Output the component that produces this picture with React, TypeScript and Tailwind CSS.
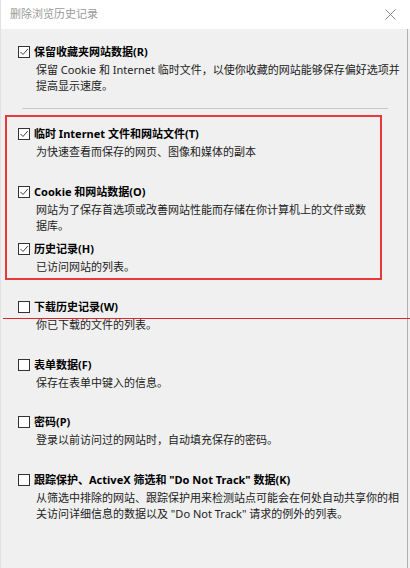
const font = { fontFamily: '"Noto Sans", "Noto Sans CJK SC", sans-serif' };

type Item = {
  label: string;
  desc: string[];
  checked: boolean;
};

const Checkbox = ({ checked }: { checked: boolean }) => (
  <span className="w-[12px] h-[12px] border border-[#333] bg-white flex items-center justify-center shrink-0">
    {checked && (
      <svg width="10" height="10" viewBox="0 0 10 10">
        <polyline points="1.5,5 4,7.5 8.8,2" fill="none" stroke="#444" strokeWidth="1" />
      </svg>
    )}
  </span>
);

const Option = ({ item, className }: { item: Item; className: string }) => (
  <div className={className}>
    <div className="flex items-center gap-[4px] h-[16px]">
      <Checkbox checked={item.checked} />
      <span className="text-[11px] font-bold text-black leading-[16px] whitespace-nowrap">{item.label}</span>
    </div>
    <div className="mt-[2px] pl-[18px] text-[11px] leading-[16px] text-[#222]">
      {item.desc.map((line) => (
        <div key={line} className="whitespace-nowrap">
          {line}
        </div>
      ))}
    </div>
  </div>
);

const boxed: Item[] = [
  { label: "临时 Internet 文件和网站文件(T)", desc: ["为快速查看而保存的网页、图像和媒体的副本"], checked: true },
  {
    label: "Cookie 和网站数据(O)",
    desc: ["网站为了保存首选项或改善网站性能而存储在你计算机上的文件或数", "据库。"],
    checked: true,
  },
  { label: "历史记录(H)", desc: ["已访问网站的列表。"], checked: true },
];

const rest: Item[] = [
  { label: "下载历史记录(W)", desc: ["你已下载的文件的列表。"], checked: false },
  { label: "表单数据(F)", desc: ["保存在表单中键入的信息。"], checked: false },
  { label: "密码(P)", desc: ["登录以前访问过的网站时，自动填充保存的密码。"], checked: false },
  {
    label: '跟踪保护、ActiveX 筛选和 "Do Not Track" 数据(K)',
    desc: ["从筛选中排除的网站、跟踪保护用来检测站点可能会在何处自动共享你的相", '关访问详细信息的数据以及 "Do Not Track" 请求的例外的列表。'],
    checked: false,
  },
];

export default function App() {
  return (
    <div className="relative w-[410px] h-[568px] bg-[#f0f0f0] overflow-hidden flex flex-col border-l border-[#e2e2e2]" style={font}>
      {/* title bar */}
      <div className="h-[29px] bg-white flex items-center justify-between pl-[9px] pr-[14px] shrink-0">
        <span className="text-[11px] text-[#9a9a9a]">删除浏览历史记录</span>
        <svg width="11" height="11" viewBox="0 0 11 11">
          <path d="M0.5 0.5 L10.5 10.5 M10.5 0.5 L0.5 10.5" stroke="#8a8a8a" strokeWidth="1" />
        </svg>
      </div>

      <div className="flex-1 flex flex-col mr-[2px] border-r border-[#b0b0b0]">
        <Option
          className="pl-[17px] mt-[15px]"
          item={{
            label: "保留收藏夹网站数据(R)",
            desc: ["保留 Cookie 和 Internet 临时文件，以使你收藏的网站能够保存偏好选项并", "提高显示速度。"],
            checked: true,
          }}
        />

        <div className="ml-[21px] w-[366px] h-px bg-[#c8c8c8] mt-[14px]" />

        {/* highlighted group */}
        <div className="ml-[4px] w-[377px] mt-[6px] border-2 border-[#e8383a] pt-[9px] pb-[3px]">
          {boxed.map((item, i) => (
            <Option key={item.label} item={item} className={i < 2 ? "pl-[11px] h-[57.5px]" : "pl-[11px]"} />
          ))}
        </div>

        <div className="mt-[19px]">
          {rest.map((item) => (
            <Option key={item.label} item={item} className="pl-[17px] h-[57.5px]" />
          ))}
        </div>
      </div>

      {/* red annotation line */}
      <div className="absolute top-[318px] left-[2px] right-0 h-px bg-[#d9262b]" />
    </div>
  );
}
